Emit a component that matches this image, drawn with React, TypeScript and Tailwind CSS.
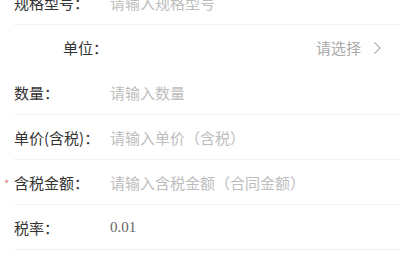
import React from "react";

const font = { fontFamily: '"Noto Sans CJK SC", "Noto Sans", sans-serif' };

function Row({
  label,
  children,
  required,
  noBorder,
  labelClass = "",
}: {
  label: string;
  children?: React.ReactNode;
  required?: boolean;
  noBorder?: boolean;
  labelClass?: string;
}) {
  return (
    <div
      className={`ml-[14px] h-[45px] flex items-center ${
        noBorder ? "" : "border-b border-[#f1f1f1]"
      }`}
    >
      <div className={`relative w-[96px] shrink-0 text-[15px] text-[#333] leading-none ${labelClass}`}>
        {required && (
          <span className="absolute left-[-10px] top-[3px] text-[11px] text-[#e27b7b] leading-none">*</span>
        )}
        {label}
      </div>
      <div className="flex-1 flex items-center pr-[18px]">{children}</div>
    </div>
  );
}

export default function App() {
  return (
    <div className="w-[400px] h-[260px] overflow-hidden bg-white" style={font}>
      <div className="mt-[-20px]">
        <Row label="规格型号：">
          <span className="text-[15px] text-[#bdbdbd] leading-none">请输入规格型号</span>
        </Row>
        <Row label="单位：" labelClass="pl-[49px]" noBorder>
          <div className="flex-1 flex justify-end items-center">
            <span className="text-[15px] text-[#aaaaaa] leading-none">请选择</span>
            <svg width="9" height="14" viewBox="0 0 9 14" className="ml-[12px]">
              <path d="M1.5 1.5 L7 7 L1.5 12.5" fill="none" stroke="#b5b5b5" strokeWidth="1.3" />
            </svg>
          </div>
        </Row>
        <Row label="数量：">
          <span className="text-[15px] text-[#bdbdbd] leading-none">请输入数量</span>
        </Row>
        <Row label="单价(含税)：">
          <span className="text-[15px] text-[#bdbdbd] leading-none">请输入单价（含税）</span>
        </Row>
        <Row label="含税金额：" required>
          <span className="text-[15px] text-[#bdbdbd] leading-none">请输入含税金额（合同金额）</span>
        </Row>
        <Row label="税率：">
          <span
            className="text-[15px] text-[#666] leading-none"
            style={{ fontFamily: '"Liberation Serif", serif' }}
          >
            0.01
          </span>
        </Row>
      </div>
    </div>
  );
}
